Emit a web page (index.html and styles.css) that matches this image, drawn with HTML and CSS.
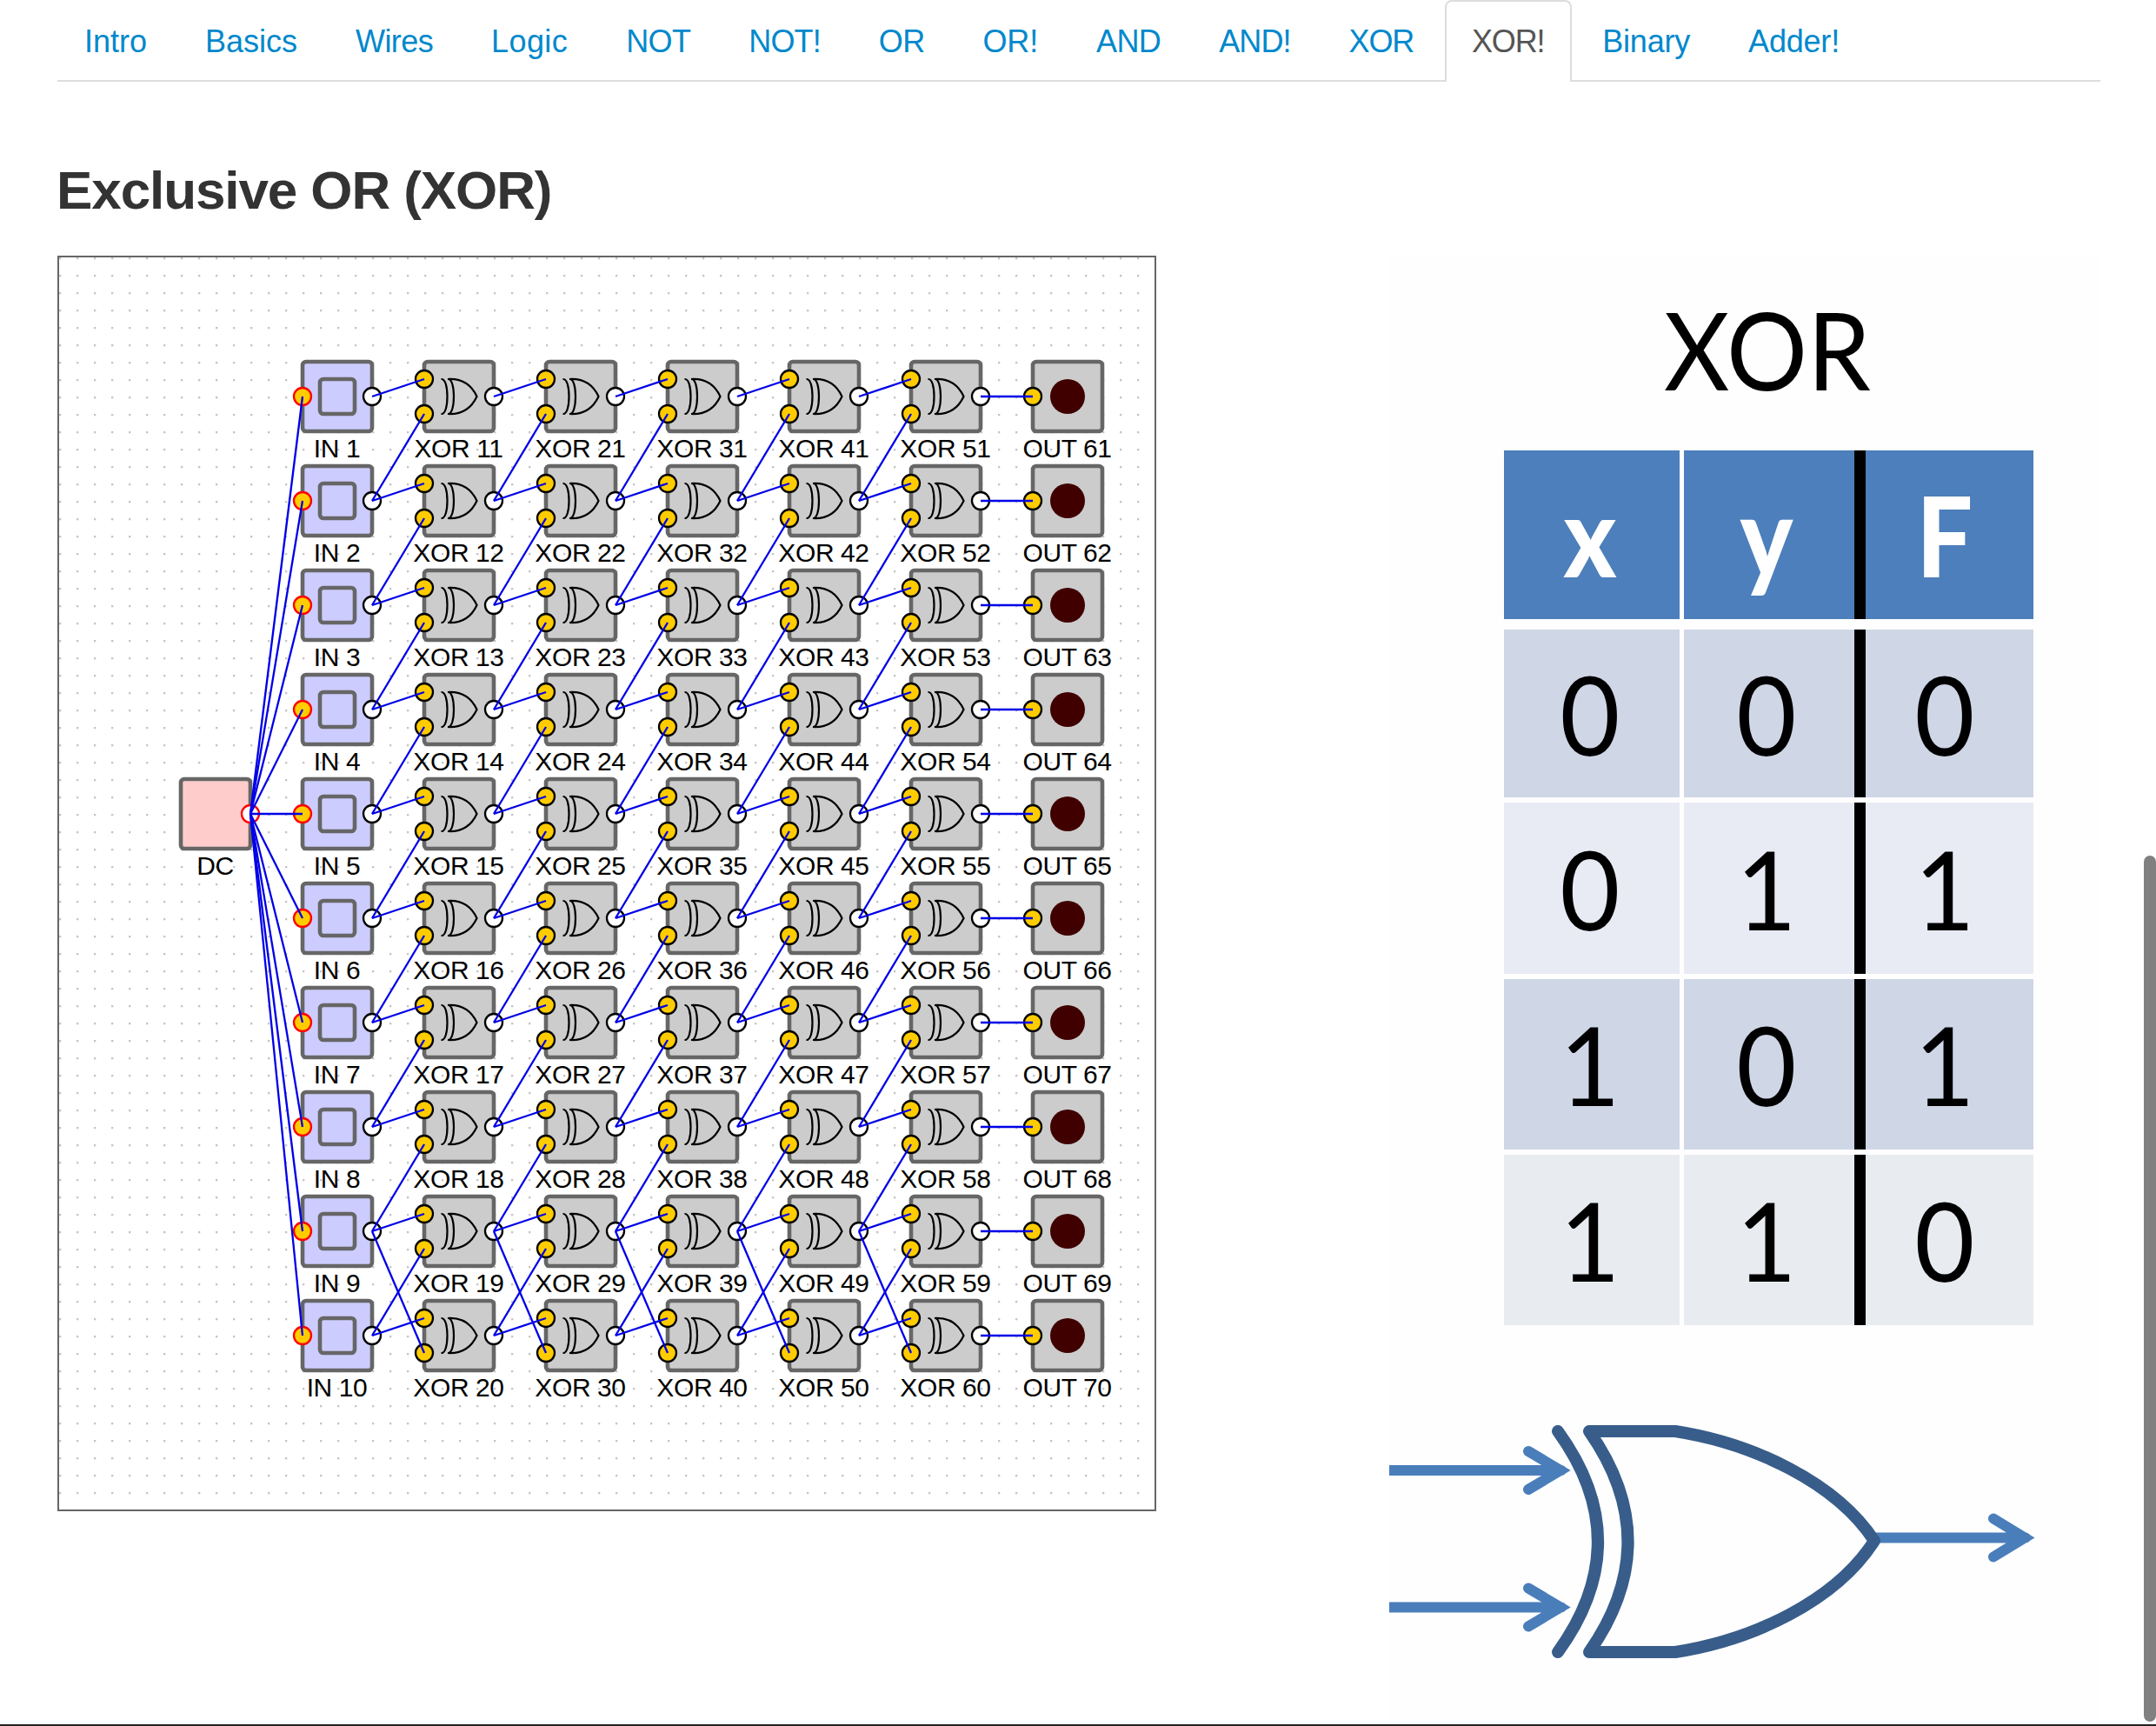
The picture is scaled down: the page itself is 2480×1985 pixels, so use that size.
FILE: index.html
```html
<!DOCTYPE html>
<html lang="en">
<head>
<meta charset="utf-8">
<title>Exclusive OR (XOR)</title>
<link rel="stylesheet" href="styles.css">
</head>
<body>
<main class="page">
  <nav class="tabs">
    <a class="tab">Intro</a>
    <a class="tab">Basics</a>
    <a class="tab tight-1">Wires</a>
    <a class="tab loose">Logic</a>
    <a class="tab tight-1">NOT</a>
    <a class="tab tight-2">NOT!</a>
    <a class="tab tight-1">OR</a>
    <a class="tab slight">OR!</a>
    <a class="tab tight-1">AND</a>
    <a class="tab tight-2">AND!</a>
    <a class="tab tight-3">XOR</a>
    <a class="tab tight-3 active">XOR!</a>
    <a class="tab slight">Binary</a>
    <a class="tab slight">Adder!</a>
  </nav>
  <h2 class="title">Exclusive OR (XOR)</h2>
  <div class="content">
    <svg class="circuit" id="circuit" viewBox="0 0 1260 1440" width="1260" height="1440">
      <defs>
        <pattern id="dots" width="20" height="20" patternUnits="userSpaceOnUse">
          <rect class="dot" width="2.300" height="2.300"/>
        </pattern>
      </defs>
      <rect width="1260" height="1440" fill="url(#dots)"/>
      <g id="devices"></g>
      <g id="wires" class="wires"></g>
    </svg>
    <section class="reference">
      <div class="caption"><span>XOR</span></div>
      <div class="truth">
        <div class="cell head"><span>x</span></div><div class="cell head mid"><span>y</span></div><div class="cell head out"><span>F</span></div>
        <div class="cell odd"><span>0</span></div><div class="cell odd mid"><span>0</span></div><div class="cell odd out"><span>0</span></div>
        <div class="cell even"><span>0</span></div><div class="cell even mid"><span>1</span></div><div class="cell even out"><span>1</span></div>
        <div class="cell odd"><span>1</span></div><div class="cell odd mid"><span>0</span></div><div class="cell odd out"><span>1</span></div>
        <div class="cell even last"><span>1</span></div><div class="cell even last mid"><span>1</span></div><div class="cell even last out"><span>0</span></div>
      </div>
      <svg class="gate" viewBox="1598 1600 818 383" width="818" height="383">
        <g class="arrow">
          <path d="M1598 1691H1796M1758 1669L1795 1691L1758 1713"/>
          <path d="M1598 1848.500H1796M1758 1826.500L1795 1848.500L1758 1870.500"/>
          <path d="M2158 1768.500H2330M2293 1746.500L2329 1768.500L2293 1790.500"/>
        </g>
        <g class="outline">
          <path d="M1792 1646Q1884 1773 1792 1900"/>
          <path d="M1828 1646H1927C2017 1660 2112 1705 2156 1772C2112 1841 2017 1886 1927 1900H1828Q1917 1773 1828 1646Z"/>
        </g>
      </svg>
    </section>
  </div>
</main>
<div class="scrollbar"></div>
<script src="circuit.js"></script>
</body>
</html>
```
FILE: styles.css
```css
body {
  margin: 0;
  height: 1985px;
  box-sizing: border-box;
  overflow: hidden;
  background: #fff;
  border-bottom: 2px solid #222;
  font-family: "Liberation Sans", Arial, sans-serif;
  color: #333;
}
.page { padding: 0 64px 0 66px; }

.tabs {
  display: flex;
  gap: 4px;
  height: 92px;
  border-bottom: 2px solid #ddd;
}
.tab {
  box-sizing: border-box;
  height: 94px;
  padding: 26px 30px 0 29px;
  border: 2px solid transparent;
  border-bottom: 0;
  border-radius: 8px 8px 0 0;
  font-size: 36px;
  line-height: 40px;
  white-space: nowrap;
  color: #0088cc;
}
.tab.active { background: #fff; border-color: #ddd; color: #555; }
.loose { letter-spacing: 0.4px; }
.slight { letter-spacing: -0.2px; }
.tight-1 { letter-spacing: -0.6px; }
.tight-2 { letter-spacing: -0.9px; }
.tight-3 { letter-spacing: -1.2px; }

.title {
  margin: 85px 0 35px;
  height: 80px;
  font-size: 62px;
  line-height: 80px;
  letter-spacing: -1.1px;
  text-indent: -1px;
  white-space: nowrap;
}

.content { display: flex; justify-content: space-between; align-items: flex-start; }

.circuit { display: block; border: 2px solid #666; }
.dot { fill: #c4c4c4; }
.box { fill: #ccc; stroke: #666; stroke-width: 4.6; }
.box.source { fill: #fcc; }
.box.switch { fill: #ccf; }
.lamp { fill: #400000; }
.symbol { fill: none; stroke: #000; stroke-width: 2.2; }
.port { stroke: #000; stroke-width: 2.3; }
.port.input { fill: #fc0; }
.port.output { fill: #fff; }
.port.hot { stroke: #f00; }
.label { font-size: 30px; text-anchor: middle; fill: #000; letter-spacing: -0.4px; }
.wires { stroke: #0000e8; stroke-width: 2.3; }

.reference { width: 818px; height: 1689px; background: #fefefe; font-family: Lato, sans-serif; }
.caption {
  height: 224px;
  padding-left: 280px;
  width: 310px;
  box-sizing: content-box;
  padding-right: 228px;
  text-align: center;
  color: #000;
  font-size: 125px;
  line-height: 214px;
}
.caption span { display: inline-block; transform: scaleX(0.93); }
.truth {
  display: grid;
  grid-template-columns: 202px 201px 206px;
  grid-template-rows: 200px 193px 197px 196px 196px;
  row-gap: 6px;
  width: 609px;
  margin-left: 132px;
}
.cell {
  display: flex;
  align-items: center;
  justify-content: center;
  padding: 0 4px 2px 0;
  font-size: 127px;
  line-height: 150px;
  color: #000;
}
.cell span { transform: scaleX(0.94); }
.mid { border-left: 5px solid #fefefe; padding-right: 7px; }
.out { border-left: 13px solid #000; padding-right: 12px; }
.head { box-sizing: border-box; height: 194px; padding-bottom: 0; background: #4c7fbb; color: #fff; font-weight: 900; }
.head span { transform: scaleX(0.9); }
.odd { background: #cfd6e6; }
.even { background: #e8ebf3; }
.last { background: #e8ecf0; }
.gate { display: block; margin-top: 76px; }
.arrow { fill: none; stroke: #4a7ebb; stroke-width: 12; stroke-linecap: round; }
.outline { fill: none; stroke: #385d8a; stroke-width: 14; stroke-linecap: round; stroke-linejoin: round; }

.scrollbar {
  position: absolute;
  right: 0;
  top: 984px;
  width: 14px;
  height: 996px;
  border-radius: 7px;
  background: #808080;
}
```
FILE: circuit.js
```js
const NS = "http://www.w3.org/2000/svg";
const ROWS = 10, COL = 140, ROW = 120, LEFT = 280, TOP = 120;
const devices = document.getElementById("devices");
const wires = document.getElementById("wires");

function add(parent, name, attrs, text) {
  const el = document.createElementNS(NS, name);
  for (const key in attrs) el.setAttribute(key, attrs[key]);
  if (text) el.textContent = text;
  parent.appendChild(el);
  return el;
}

function device(x, y, kind, text) {
  const g = add(devices, "g", { transform: `translate(${x} ${y})` });
  add(g, "rect", { class: "box " + kind, width: 80, height: 80, rx: 4 });
  if (kind === "switch") add(g, "rect", { class: "box switch", x: 20, y: 20, width: 40, height: 40, rx: 4 });
  if (kind === "led") add(g, "circle", { class: "lamp", cx: 40, cy: 40, r: 20 });
  if (kind === "xor") {
    add(g, "path", { class: "symbol", d: "M19.500 20C24.500 19.500 26.500 30 26.500 40S24.500 60.500 19.500 60M27 20C32 19.500 34 30 34 40S32 60.500 27 60M27 20C44 19 54 26 60.500 40C54 54 44 61 27 60" });
  }
  const port = (cx, cy, cls) => add(g, "circle", { class: "port " + cls, cx, cy, r: 10 });
  if (kind === "switch") port(0, 40, "input hot");
  if (kind === "led") port(0, 40, "input");
  if (kind === "xor") { port(0, 20, "input"); port(0, 60, "input"); }
  if (kind !== "led") port(80, 40, kind === "source" ? "output hot" : "output");
  add(g, "text", { class: "label", x: 39.5, y: 110 }, text);
}

function wire(x1, y1, x2, y2) {
  add(wires, "line", { x1, y1, x2, y2 });
}

device(140, 600, "source", "DC");
for (let c = 0; c < 7; c++) {
  const kind = c === 0 ? "switch" : c === 6 ? "led" : "xor";
  const name = { switch: "IN", xor: "XOR", led: "OUT" }[kind];
  const x = LEFT + c * COL;
  for (let r = 0; r < ROWS; r++) {
    const y = TOP + r * ROW;
    device(x, y, kind, `${name} ${c * ROWS + r + 1}`);
    if (kind === "switch") wire(220, 640, x, y + 40);
    if (kind === "led") wire(x - 60, y + 40, x, y + 40);
    if (kind === "xor") {
      const second = r === ROWS - 1 ? r - 1 : r + 1;
      wire(x - 60, y + 40, x, y + 20);
      wire(x - 60, TOP + second * ROW + 40, x, y + 60);
    }
  }
}
```
